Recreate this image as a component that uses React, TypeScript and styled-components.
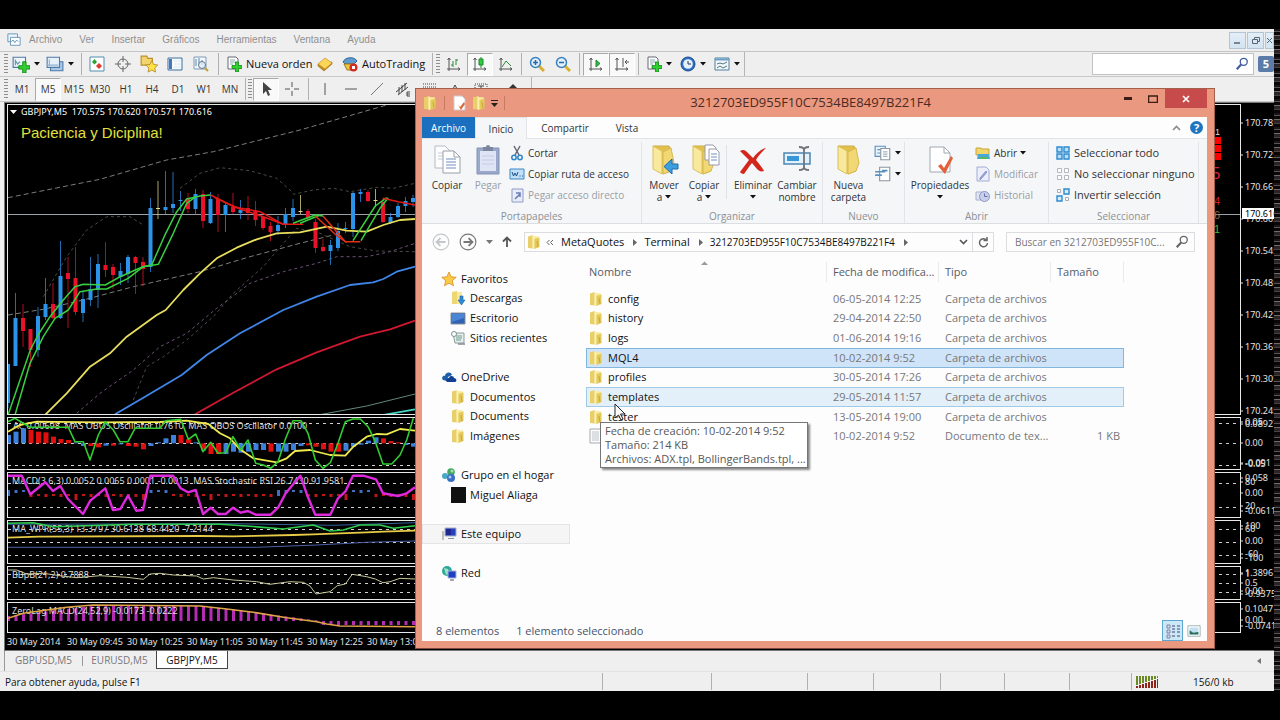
import React from "react";
import styled, { createGlobalStyle, css } from "styled-components";

const Global = createGlobalStyle`
  * { box-sizing: border-box; }
  body { margin: 0; background: #000; font: 11px/14px "Open Sans", "Noto Sans", sans-serif; color: #111; }
  button { font: inherit; color: inherit; border: 0; padding: 0; background: none; text-align: left; }
  a { color: inherit; text-decoration: none; }
  svg { display: block; flex: none; }
`;

/* ---------- terminal shell ---------- */

const Screen = styled.div`
  position: relative;
  display: grid;
  grid-template-columns: minmax(0, 1fr) 6px;
  min-height: 100vh;
  padding: 29px 0;
  background: #000;
  overflow: hidden;
`;
const Terminal = styled.div`
  display: flex;
  flex-direction: column;
  background: #f0eff0;
`;
const Static = styled.div`
  background: repeating-linear-gradient(#1a1517 0 2px, #5c5557 2px 3px, #0a0808 3px 6px, #6f6a6b 6px 7px, #2b2426 7px 10px, #494244 10px 11px, #080606 11px 14px);
`;
const MenuBar = styled.nav`
  display: flex;
  align-items: center;
  height: 23px;
  padding-left: 7px;
  border-bottom: 1px solid #c4c4c4;
  font-family: "Liberation Sans", sans-serif;
  font-size: 10px;
  color: #8f8f8f;
`;
const MenuItem = styled.button`
  margin-right: 17px;
`;
const MenuLogo = styled.span`
  margin-right: 8px;
`;
const WindowKeys = styled.div`
  display: flex;
  align-self: flex-start;
  gap: 1px;
  margin: 3px 0 0 auto;
`;
const WindowKey = styled.button<{ $w: number }>`
  display: grid;
  place-items: center;
  width: ${(p) => p.$w}px;
  height: 17px;
  overflow: hidden;
  border: 1px solid #b4c6d6;
  background: linear-gradient(#e4eef7, #d3e3f1);
`;
const ToolBar = styled.div`
  display: flex;
  align-items: center;
  height: 25px;
  padding-left: 4px;
  border-bottom: 1px solid #c8c8c8;
`;
const ToolGroup = styled.div<{ $edge?: boolean }>`
  display: flex;
  align-items: center;
  height: 24px;
  border-right: ${(p) => (p.$edge ? "1px solid #b5b5b5" : "0")};
`;
const Grip = styled.span`
  width: 4px;
  height: 20px;
  margin-right: 1px;
  background: repeating-linear-gradient(#8e8e8e 0 1px, transparent 1px 3px);
`;
const Divider = styled.span<{ $w: number }>`
  width: ${(p) => p.$w}px;
  height: 22px;
  background: linear-gradient(#b0b0b0, #b0b0b0) center / 1px 100% no-repeat;
`;
const Tool = styled.button<{ $w?: number; $on?: boolean; $start?: boolean }>`
  display: flex;
  align-items: center;
  justify-content: ${(p) => (p.$start ? "flex-start" : "center")};
  gap: 4px;
  width: ${(p) => p.$w ?? 26}px;
  height: 23px;
  padding-left: ${(p) => (p.$start ? 3 : 0)}px;
  white-space: nowrap;
  border: 1px solid transparent;
  ${(p) =>
    p.$on &&
    css`
      background: #f9f9f9;
      border-color: #a9a9a9 #fff #fff #a9a9a9;
    `}
`;
const Period = styled(Tool)`
  font-size: 10px;
  color: #333;
`;
const SearchField = styled.label`
  display: flex;
  align-items: center;
  width: 162px;
  height: 22px;
  margin-left: auto;
  padding-right: 4px;
  background: #fff;
  border: 1px solid #c2c2c2;
  input { flex: 1; min-width: 0; border: 0; outline: 0; background: none; }
`;
const News = styled.button`
  display: grid;
  place-items: center;
  width: 16px;
  height: 16px;
  margin-left: 4px;
  border-radius: 2px;
  background: #5b7ba8;
  color: #fff;
  font-weight: 700;
`;

/* ---------- charts ---------- */

const Charts = styled.main`
  display: flex;
  flex: 1;
  flex-direction: column;
  gap: 2px;
  margin-left: 4px;
  padding: 1px 0 0 2px;
  background: #000;
  border: solid #777;
  border-width: 1px 0 1px 1px;
`;
const Pane = styled.section<{ $h: number }>`
  display: flex;
  height: ${(p) => p.$h}px;
`;
const Plot = styled.svg`
  flex: 1;
  min-width: 0;
  height: 100%;
  border: 1px solid #e8e8e8;
  font: 9px "Noto Sans", sans-serif;
`;
const Scale = styled.svg`
  width: 33px;
  height: 100%;
  overflow: visible;
  font: 9px "Noto Sans", sans-serif;
  fill: #e4e4e4;
  clip-path: inset(-6px 0);
`;
const TimeAxis = styled.div`
  display: flex;
  height: 14px;
  overflow: hidden;
  color: #e4e4e4;
  font: 9px/14px "Noto Sans", sans-serif;
  white-space: nowrap;
`;
const TimeMark = styled.span`
  flex: none;
  width: 60px;
`;
const Sheets = styled.div`
  display: flex;
  height: 20px;
  margin-left: 4px;
  color: #777;
  border-left: 1px solid #999;
`;
const SheetRule = styled.i`
  width: 1px;
  height: 10px;
  margin-top: 5px;
  background: #999;
`;
const Sheet = styled.button<{ $on?: boolean; $w: number }>`
  width: ${(p) => p.$w}px;
  height: 18px;
  font-size: 10px;
  text-align: center;
  background: ${(p) => (p.$on ? "#fff" : "none")};
  color: ${(p) => (p.$on ? "#111" : "inherit")};
  border: solid ${(p) => (p.$on ? "#444" : "transparent")};
  border-width: 0 1px 1px;
`;
const SheetScroll = styled.button`
  margin: 0 13px 0 auto;
`;
const StatusBar = styled.footer`
  display: flex;
  align-items: center;
  height: 20px;
  padding-left: 5px;
  border-top: 1px solid #e2e2e2;
  font-size: 10px;
`;
const StatusText = styled.span`
  flex: 1;
`;
const StatusCell = styled.span<{ $w: number }>`
  display: flex;
  align-items: center;
  gap: 35px;
  width: ${(p) => p.$w}px;
  height: 17px;
  padding-left: 4px;
  border-left: 1px solid #b0b0b0;
  white-space: nowrap;
`;

type Candle = [string, number, number, number, number];
const BLUE = "#2b93ea";
const RED = "#ea122b";
const CREAM = "#e3dc86";
const candles: Candle[] = [
  [BLUE, 364, 408, 364, 403], [BLUE, 293, 366, 318, 366], [RED, 304, 347, 318, 331], [RED, 329, 367, 329, 350],
  [BLUE, 307, 357, 316, 350], [BLUE, 278, 320, 304, 317], [RED, 283, 319, 304, 318], [BLUE, 241, 319, 276, 318],
  [RED, 257, 328, 273, 279], [RED, 247, 315, 278, 312], [BLUE, 291, 322, 299, 313], [BLUE, 257, 306, 289, 300],
  [BLUE, 254, 308, 264, 290], [RED, 242, 277, 265, 270], [RED, 264, 289, 267, 275], [BLUE, 263, 285, 271, 277],
  [BLUE, 255, 283, 257, 274], [RED, 256, 294, 257, 263], [RED, 257, 286, 262, 269], [BLUE, 198, 272, 208, 267],
  [CREAM, 181, 219, 208, 209], [BLUE, 171, 214, 207, 210], [BLUE, 172, 213, 204, 208], [BLUE, 191, 211, 200, 201],
  [RED, 193, 213, 198, 209], [BLUE, 189, 215, 194, 209], [RED, 190, 228, 194, 221], [BLUE, 192, 224, 199, 223],
  [RED, 194, 232, 199, 215], [BLUE, 203, 232, 205, 215], [RED, 193, 214, 207, 212], [BLUE, 200, 219, 210, 213],
  [RED, 196, 220, 208, 213], [RED, 201, 226, 211, 220], [RED, 217, 230, 217, 228], [RED, 222, 241, 226, 232],
  [BLUE, 216, 235, 225, 231], [BLUE, 208, 228, 214, 225], [BLUE, 199, 221, 208, 217], [CREAM, 195, 214, 211, 212],
  [RED, 209, 219, 211, 218], [RED, 219, 253, 222, 248], [RED, 239, 252, 247, 251], [BLUE, 240, 265, 245, 251],
  [BLUE, 223, 251, 231, 248], [BLUE, 222, 233, 228, 229], [BLUE, 192, 237, 193, 229], [BLUE, 189, 202, 192, 194],
  [RED, 190, 202, 192, 201], [CREAM, 189, 207, 200, 201], [RED, 198, 223, 202, 222], [BLUE, 213, 224, 217, 223],
  [BLUE, 203, 218, 206, 217], [BLUE, 197, 212, 201, 206], [BLUE, 195, 207, 198, 202],
];

const scaled = (raw: string, dy: number) =>
  raw.split(" ").map((pt) => {
    const [x, y] = pt.split(",").map(Number);
    return `${(x / 3 - 8).toFixed(1)},${(y / 3 + dy).toFixed(1)}`;
  }).join(" ");

const Series = ({ d, dy, c, w = 1, dash }: { d: string; dy: number; c: string; w?: number; dash?: string }) => (
  <polyline points={scaled(d, dy)} fill="none" stroke={c} strokeWidth={w} strokeDasharray={dash} strokeLinejoin="round" />
);
const Level = ({ y, dy }: { y: number; dy: number }) => (
  <line x1="0" x2="100%" y1={Math.round(y / 3 + dy) + 0.5} y2={Math.round(y / 3 + dy) + 0.5} stroke="#d0d0d0" strokeDasharray="3 4" />
);
const Ticks = ({ marks }: { marks: [number, string][] }) => (
  <Scale>
    {marks.map(([y, t], i) => (
      <g key={i}>
        <path d={`M0 ${y}h2`} stroke="#ddd" />
        <text x="4" y={y + 3}>{t}</text>
      </g>
    ))}
  </Scale>
);

const MainPane = () => (
  <Pane $h={311} aria-label="GBPJPY">
    <Plot>
      <Series dy={-5} c="#7a7f7a" dash="5 3" d="24,293 300,238 500,180 640,155 900,90 1160,15" />
      <Series dy={-5} c="#454d45" dash="3 3" d="130,590 200,470 260,390 320,350 390,350 430,375" />
      <Series dy={-5} c="#454d45" dash="3 3" d="540,265 600,220 660,203 750,212 830,235 870,270 880,283 940,270 1000,265 1050,275 1130,262 1180,265 1245,250" />
      <Series dy={-5} c="#7a7f7a" dash="5 3" d="24,645 130,628 250,600 400,560 600,515 750,470 900,430 1000,405" />
      <Series dy={-5} c="#70507a" dash="3 3" d="230,940 300,880 400,810 480,740 560,700 650,625 750,550 850,515 950,490 1010,470 1100,470 1170,455 1245,430" />
      <Series dy={-5} c="#454d45" dash="3 3" d="400,900 440,800 490,770 560,720 640,650 700,580 790,500 850,430 890,385 960,400 1050,440 1130,453 1245,455" />
      <line x1="0" x2="100%" y1="109.5" y2="109.5" stroke="#9aa0a6" />
      {candles.map(([c, hi, lo, a, b], i) => (
        <g key={i} fill={c}>
          <rect x={i * 7.5 - 0.5} y={hi - 105} width="1" height={lo - hi} opacity=".75" />
          <rect x={i * 7.5 - 2} y={a - 105} width="4" height={b - a} />
        </g>
      ))}
      <Series dy={-5} c="#e8de5e" w={1.8} d="135,945 200,880 270,800 330,760 380,710 470,645 497,630 550,570 600,520 650,475 710,443 770,418 830,400 900,397 980,380 1040,392 1100,395 1150,375 1200,360 1245,357" />
      <Series dy={-5} c="#3f86e8" w={1.8} d="345,943 430,893 545,825 620,765 720,700 850,630 950,590 1050,555 1120,547 1150,537 1190,515 1245,500" />
      <Series dy={-5} c="#d01830" w={1.8} d="585,943 700,878 830,808 950,757 1080,710 1170,688 1245,662" />
      <Series dy={-5} c="#5f8a7c" d="955,945 1100,918 1245,882" />
      <Series dy={-5} c="#46d6c4" w={1.8} d="1150,945 1245,928" />
      <Series dy={-5} c="#38d040" w={1.5} d="24,945 60,840 91,750 114,705 150,650 190,600 225,560 250,553 316,555 361,530 406,510 429,500 455,495 497,400 530,335 560,297 600,288 632,285" />
      <Series dy={-5} c="#38d040" w={1.5} d="45,945 90,790 130,710 165,655 205,630 240,575 290,567 320,567 384,535 430,500 475,493 520,400 560,310 587,290" />
      <Series dy={-5} c="#e01818" w={1.5} d="632,285 700,320 780,335 850,373 910,373" />
      <Series dy={-5} c="#e01818" w={1.5} d="645,293 720,327 790,350 850,373" />
      <Series dy={-5} c="#38d040" w={1.5} d="879,370 946,345 969,348" />
      <Series dy={-5} c="#38d040" w={1.5} d="900,370 960,345" />
      <Series dy={-5} c="#e03018" w={1.5} d="969,348 1036,425 1081,425" />
      <Series dy={-5} c="#e03018" w={1.5} d="946,348 1014,410 1040,427" />
      <Series dy={-5} c="#38d040" w={1.5} d="1059,422 1126,318 1160,293" />
      <Series dy={-5} c="#38d040" w={1.5} d="1083,422 1140,325 1165,293" />
      <Series dy={-5} c="#e01818" w={1.5} d="1149,295 1195,305 1245,315" />
      <path d="M2 5h7l-3.500 4z" fill="#fff" />
      <text x="13" y="10" fill="#fff">GBPJPY,M5&nbsp; 170.575 170.620 170.571 170.616</text>
      <text x="13" y="33" fill="#e2e03c" fontSize="15" fontFamily="Liberation Sans, sans-serif">Paciencia y Diciplina!</text>
      <svg x="100%" overflow="visible">
        <g fontFamily="Liberation Sans, sans-serif">
          <text x="-25" y="30" fontSize="9" fill="#ddd">1</text>
          <path d="M-28 32h9v7h-9zM-28 40h9v7h-9zM-28 48h9v7h-9z" fill="#f00" />
          <text x="-29" y="74" fontSize="17" fill="#d8203c">5</text>
          <text x="-26" y="100" fontSize="11" fill="#d02020">4</text>
          <text x="-26" y="114" fontSize="11" fill="#8a6a50">6</text>
          <text x="-26" y="128" fontSize="11" fill="#30c030">1</text>
        </g>
      </svg>
    </Plot>
    <Scale>
      {["785", "725", "665", "605", "545", "485", "425", "365", "305", "245"].map((n, i) => (
        <g key={n}>
          <path d={`M0 ${19 + i * 32}h2`} stroke="#ddd" />
          <text x="4" y={22 + i * 32}>170.{n}</text>
        </g>
      ))}
      <path d="M1 104h32v11H1z" fill="#fff" />
      <text x="4" y="113" fill="#000">170.616</text>
    </Scale>
  </Pane>
);

const at = (i: number) => i * 7.5;
const oscTops = [75, 65, 55, 60, 65, 67, 80, 87, 90, 97, 108, 108, 112, 107, 107, 103, 108, 110, 118, 108, 97, 85, 75, 75, 88, 97, 122, 132, 132, 132, 125, 128, 125, 120, 120, 125, 125, 125, 120, 108, 106, 110, 118, 125, 125, 122, 110, 104, 92, 82, 85, 93, 97, 105, 110];
const oscRed = [3, 4, 5, 6, 7, 8, 11, 12, 14, 16, 17, 18, 23, 24, 26, 27, 28, 35, 40, 41, 42, 43, 44, 50, 51, 52];
const macdBlue = [0, 1, 2, 19, 20, 21, 36, 37, 38, 39, 46, 47, 48];

const Oscillators = () => (
  <>
    <Pane $h={53}>
      <Plot>
        {[38, 100, 165].map((y) => <Level key={y} y={y} dy={-8} />)}
        <text x="5" y="11" fill="#ddd">AC 0.00698&nbsp; MAS OBOS Oscillator 0.7610&nbsp; MAS OBOS Oscillator 0.0100</text>
        {oscTops.map((t, i) => (
          <rect key={i} x={at(i) - 2} width="5" y={Math.min(t, 100) / 3 - 8} height={Math.abs(t - 100) / 3} fill={oscRed.includes(i) ? "#e01010" : "#3c82dc"} />
        ))}
        <Series dy={-8} c="#f0ea50" w={1.8} d="24,65 60,45 110,35 300,37 480,36 560,32 625,42 660,70 690,85 720,118 760,145 830,157 860,145 885,123 930,120 990,135 1036,137 1060,110 1100,80 1130,72 1160,73 1200,57 1245,62" />
        <Series dy={-8} c="#30cc30" w={1.6} d="24,35 45,25 70,40 90,52 205,52 225,95 250,95 270,150 295,75 316,35 340,60 360,95 384,95 405,55 480,55 497,32 542,28 565,88 587,72 609,125 632,97 654,130 677,128 699,80 722,120 744,90 767,160 790,165 812,175 834,155 857,85 879,32 903,32 924,70 946,150 969,175 991,158 1014,100 1036,35 1059,27 1081,27 1104,50 1126,95 1149,162 1175,162 1200,135 1220,90 1240,25" />
      </Plot>
      <Ticks marks={[[5, "0.05"], [7, "0.08927"], [26, "0.00"], [46, "-0.091"], [47, "-0.05"]]} />
    </Pane>
    <Pane $h={46}>
      <Plot>
        {[218, 292].map((y) => <Level key={y} y={y} dy={-63} />)}
        <text x="4" y="11" fill="#ddd">MACD(3,6,3) 0.0052 0.0065 0.0001 -0.0013&nbsp; MAS Stochastic RSI 26.7430 91.9581</text>
        {oscTops.map((_, i) => (
          <rect key={i} x={at(i) - 1} width="3" y={macdBlue.includes(i) ? 17 : 21} height={i % 9 === 0 ? 6 : i % 2 ? 3 : 2} fill={macdBlue.includes(i) ? "#3f6fc0" : "#c01818"} />
        ))}
        <Series dy={-63} c="#dd28dd" w={2.4} d="24,197 65,197 91,253 136,217 159,243 181,228 204,267 249,312 271,272 316,235 339,300 361,297 384,257 409,302 429,300 451,197 519,197 542,235 564,247 587,240 609,312 632,293 654,312 677,312 699,293 722,308 744,303 767,314 812,314 834,293 857,250 901,197 924,262 946,314 991,314 1014,265 1036,245 1059,197 1090,197 1128,208 1149,250 1194,258 1220,250 1245,232" />
      </Plot>
      <Ticks marks={[[6, "0.058"], [10, "80"], [21, "0.00"], [34, "20"], [39, "-0.0611"]]} />
    </Pane>
    <Pane $h={44}>
      <Plot>
        {[358, 395, 434].map((y) => <Level key={y} y={y} dy={-111} />)}
        <text x="4" y="11" fill="#ddd">MA_WPR(55,3) 13.3797 30.6138 68.4420 -7.2144</text>
        <Series dy={-111} c="#3a5f98" d="24,343 700,341 1000,346 1245,338" />
        <Series dy={-111} c="#30cc50" w={1.6} d="24,340 100,338 160,350 400,343 660,343 740,348 850,357 900,350 940,345 990,363 1030,360 1080,345 1140,345 1180,355 1245,347" />
        <Series dy={-111} c="#e8cc48" w={1.8} d="24,383 115,380 600,378 700,379 880,375 940,373 1100,367 1150,365 1245,362" />
        <Series dy={-111} c="#4a62a8" d="24,412 770,412 950,405 1100,397 1245,393" />
      </Plot>
      <Ticks marks={[[6, "100"], [9, "60"], [21, "0.00"], [34, "-60"], [38, "-100"]]} />
    </Pane>
    <Pane $h={34}>
      <Plot>
        {[493, 518, 545].map((y) => <Level key={y} y={y} dy={-157} />)}
        <text x="4" y="11" fill="#ddd">BBpB(21,2) 0.7888</text>
        <Series dy={-157} c="#c6c79a" d="24,480 50,480 80,492 130,490 180,497 230,503 300,497 380,502 430,508 450,492 480,490 520,495 590,498 610,507 640,503 700,510 770,515 810,523 870,515 910,517 930,528 948,552 990,545 1012,527 1036,522 1057,493 1100,500 1126,507 1149,518 1170,515 1200,505 1245,507" />
      </Plot>
      <Ticks marks={[[7, "1.3896"], [8, "1"], [17, "0.5"], [25, "0.00"], [28, "-0.9375"]]} />
    </Pane>
    <Pane $h={31}>
      <Plot>
        {oscTops.map((_, i) => {
          const top = i < 12 ? 12 - i * 0.9 : i < 26 ? 2 : Math.min(17, 2 + (i - 26) * 0.95);
          return <rect key={i} x={at(i) - 1} width="3" y={i > 41 ? 18 : top + 1} height={i > 41 ? 4 : 17 - top} fill="#b42cb4" />;
        })}
        <text x="4" y="11" fill="#ddd">ZeroLag MACD(24,52,9) -0.0173 -0.0222</text>
        <Series dy={-193} c="#e0a448" w={1.6} d="24,625 70,610 200,592 280,585 600,588 680,597 760,607 860,623 950,635 980,642 1020,648 1245,650" />
      </Plot>
      <Ticks marks={[[7, "0.1047"], [18, "0.00"], [24, "-0.0741"]]} />
    </Pane>
  </>
);

/* ---------- icons ---------- */

const Ico = ({ s = 16, children, ...rest }: { s?: number; children: React.ReactNode } & React.SVGProps<SVGSVGElement>) => (
  <svg width={s} height={s} viewBox="0 0 16 16" fill="none" aria-hidden {...rest}>{children}</svg>
);
const Plus = ({ x = 6, y = 6 }) => (
  <path transform={`translate(${x} ${y})`} d="M3.500 0h3v3.500H10v3H6.500V10h-3V6.500H0v-3h3.500z" fill="#2fd02f" stroke="#128a18" strokeWidth=".8" />
);
const Caret = () => <svg width="6" height="4" aria-hidden><path d="M0 0h6L3 3.500z" fill="#111" /></svg>;
const NewChart = () => <Ico s={18}><path d="M1 2h11v9H1z" fill="#eef5fb" stroke="#4e7ba6" /><path d="M3 4v5M3 5l2 3 2-2" stroke="#69a" /><Plus /></Ico>;
const Profiles = () => <Ico s={18}><path d="M4 6h11v8H4z" fill="#a9c7e6" stroke="#4e7ba6" /><path d="M1 2h11v9H1z" fill="#e6f1fb" stroke="#4e7ba6" /><path d="M3 4v5M1 9h10" stroke="#8fb2d2" /></Ico>;
const Market = () => <Ico><path d="M1 1h14v14H1z" fill="#fff" stroke="#4e8fae" /><path d="M5.500 3l2.500 3-2.500 2.500L3 6z" fill="#25a52b" /><path d="M10 7l3 3-3 3-3-3z" fill="#e0392a" /></Ico>;
const Target = () => <Ico stroke="#666"><circle cx="8" cy="8" r="5" /><path d="M8 0v6M8 10v6M0 8h6M10 8h6" /></Ico>;
const StarFolder = () => <Ico s={18}><path d="M1 1h5l1 2h4v6H1z" fill="#f3d46c" stroke="#b98f28" /><path d="M10.500 5l1.600 3.400 3.700.5-2.700 2.600.7 3.700-3.300-1.800-3.300 1.800.7-3.700L5.200 8.900l3.700-.5z" fill="#ffe14a" stroke="#b98f28" strokeWidth=".8" /></Ico>;
const Panel = () => <Ico><path d="M1 2h14v12H1z" fill="#f7fafd" stroke="#3f6f9f" /><path d="M2 3h3v10H2z" fill="#3d7ab6" /><path d="M7 5h7M7 8h7M7 11h7" stroke="#dbe7f2" /></Ico>;
const Tester = () => <Ico><path d="M1 1h12v12H1z" fill="#f4f8fc" stroke="#7c9ab6" /><path d="M3 3v7M6 2v6M9 4v5" stroke="#5583ad" /><circle cx="9" cy="9" r="3.500" fill="#d9ecf8cc" stroke="#678" /><path d="M12 12l3 3" stroke="#c6a02c" strokeWidth="2" /></Ico>;
const NewOrder = () => <Ico><path d="M2 1h8l2 2v10H2z" fill="#fff" stroke="#667" /><path d="M4 4h5M4 6h6M4 8h3" stroke="#8aa" /><Plus /></Ico>;
const Gold = () => <Ico><path d="M1 8v2l6 5 8-7V6z" fill="#c48e1c" stroke="#94680c" strokeWidth=".6" /><path d="M1 8l7-6 7 5-7 6z" fill="#fbd458" stroke="#b5851a" strokeWidth=".6" /></Ico>;
const Auto = () => <Ico><path d="M1 6c2-5 11-6 14-1l-3 3H3z" fill="#5f9bd1" stroke="#2c6397" /><path d="M2 8h11l-2 6H5z" fill="#f0c542" stroke="#a37b12" /><circle cx="11.500" cy="11.500" r="4" fill="#d32b20" /><path d="M10 10h3v3h-3z" fill="#fff" /></Ico>;
const Axes = ({ children }: { children: React.ReactNode }) => <Ico stroke="#555"><path d="M3 2v13M1 13h13M1.500 4L3 2l1.500 2M12 11.500L14 13l-2 1.500" />{children}</Ico>;
const Lens = ({ minus }: { minus?: boolean }) => <Ico><path d="M10 10l5 5" stroke="#d9b030" strokeWidth="3" /><circle cx="6.500" cy="6.500" r="5" fill="#dff0fb" stroke="#3b80bd" strokeWidth="1.500" /><path d={minus ? "M4 6.500h5" : "M4 6.500h5M6.500 4v5"} stroke="#2668a8" strokeWidth="1.500" /></Ico>;
const Clock = () => <Ico><circle cx="8" cy="8" r="7" fill="#2e6fc0" stroke="#1b4c8c" /><circle cx="8" cy="8" r="4.800" fill="#e5f1fc" /><path d="M8 5v3h3" stroke="#334" /></Ico>;
const Template = () => <Ico><path d="M1 2h14v12H1z" fill="#f1f7fb" stroke="#4c7f9e" /><path d="M1 3.500h14" stroke="#6ea0c4" strokeWidth="2" /><path d="M3 8l3-1 3 1 4-2M3 12l3-2 3 2 4-2" stroke="#577" /></Ico>;
const Glass = ({ c = "#3f5ca0" }) => <Ico s={14} stroke={c}><circle cx="10" cy="5.500" r="4" strokeWidth="1.500" /><path d="M7 8.500L2 14" strokeWidth="2.500" /></Ico>;

const Folder = ({ s = 16 }: { s?: number }) => (
  <Ico s={s}>
    <path d="M2 2.500L7 1v13.500L2 14z" fill="#e9cf6a" />
    <path d="M7 2l6 .5V13l-6 2z" fill="#f7ea9c" />
    <path d="M8.500 5l5-1.500v9.500l-5 2z" fill="#e3c95a" />
    <path d="M7 1.500v13" stroke="#fff6c4" />
    <path d="M11 7l1 6" stroke="#c9a83a" />
  </Ico>
);
const CopyPages = () => (
  <svg width="32" height="32" viewBox="0 0 32 32" fill="none" aria-hidden>
    <path d="M4 2h10l5 5v17H4z" fill="#fdfdfd" stroke="#b4bac2" />
    <path d="M7 9h8M7 12h8M7 15h8" stroke="#c6cdd6" />
    <path d="M12 7h11l6 6v16H12z" fill="#fff" stroke="#98a0aa" />
    <path d="M23 7v6h6" stroke="#98a0aa" />
    <path d="M15 15h10M15 18h10M15 21h10M15 24h10" stroke="#6f8fbf" />
  </svg>
);
const Clipboard = () => (
  <svg width="32" height="32" viewBox="0 0 32 32" fill="none" aria-hidden>
    <path d="M5 4h22v26H5z" fill="#9aa8ca" stroke="#8593b8" />
    <path d="M8 7h16v20H8z" fill="#dfe5f5" />
    <path d="M10 12h12M10 16h12M10 20h12" stroke="#c4cde4" />
    <path d="M11 3h3a2 2 0 014 0h3v4H11z" fill="#7c86a0" />
  </svg>
);
const BigFolder = ({ mark }: { mark?: "move" | "copy" }) => (
  <svg width="32" height="32" viewBox="0 0 32 32" fill="none" aria-hidden>
    <path d="M5 2h16l2 3v22l-8 3z" fill="#e3bf4c" stroke="#cfae48" />
    <path d="M15 8l8-4 3 15-3 8-8 3z" fill="#f2d873" stroke="#d8b850" />
    <path d="M5 2l9 5v23l-9-5z" fill="#f9e99c" stroke="#dcc05a" />
    {mark === "move" && <path d="M30 20h-6v-5l-8 7.500 8 7.500v-5h6z" fill="#3b9fe0" stroke="#1c6cae" />}
    {mark === "copy" && <g><path d="M17 1h8l3 3v12H17z" fill="#fff" stroke="#99a" /><path d="M21 5h7l3 3v13H21z" fill="#fff" stroke="#99a" /><path d="M23 10h6M23 13h6M23 16h6" stroke="#6f8fbf" /></g>}
  </svg>
);
const RedCross = () => (
  <svg width="32" height="32" viewBox="0 0 32 32" aria-hidden>
    <path d="M3 7c3-2 5-1 7 1l6 6c4-5 8-9 13-10-4 4-8 8-10 12 3 4 6 7 8 11-3 1-5 0-7-2l-5-6c-3 3-5 7-8 11-2 0-3-1-4-2 3-4 6-8 9-12-3-3-6-6-9-9z" fill="#d3261c" />
  </svg>
);
const Rename = () => (
  <svg width="32" height="32" viewBox="0 0 32 32" fill="none" aria-hidden>
    <path d="M3 9h26v11H3z" fill="#e4f1fb" stroke="#4c86b4" strokeWidth="1.500" />
    <path d="M6 12h12v5H6z" fill="#3797d8" />
    <path d="M18 3c4 0 5 1 5 3v17c0 2-1 3-5 3M28 3c-4 0-5 1-5 3v17c0 2 1 3 5 3" stroke="#707478" strokeWidth="1.800" />
  </svg>
);
const PropSheet = () => (
  <svg width="32" height="32" viewBox="0 0 32 32" fill="none" aria-hidden>
    <path d="M6 3h14l6 6v19H6z" fill="#fff" stroke="#a0a8b0" />
    <path d="M20 3v6h6" stroke="#a0a8b0" />
    <path d="M14 22l3-2 3 4 7-12 2 2-8 16z" fill="#e0613a" />
  </svg>
);
const Cut = () => <Ico><path d="M5 1l5 9M11 1L6 10" stroke="#667" strokeWidth="1.500" /><circle cx="5" cy="12.500" r="2.200" stroke="#2d87c8" strokeWidth="1.500" /><circle cx="11" cy="12.500" r="2.200" stroke="#2d87c8" strokeWidth="1.500" /></Ico>;
const PathIcon = () => <Ico><path d="M1 3h14v10H1z" fill="#bfe0f8" stroke="#3e86bf" /><path d="M3 6l1.500 4L6 7l1.500 3L9 6M10.500 10h1M13 10h1" stroke="#1c4f86" /></Ico>;
const Shortcut = () => <Ico><path d="M3 2h11v13H3z" fill="#e8ecf8" stroke="#8f9cc4" /><path d="M6 12l5-5M7 6h4v4" stroke="#6a79b4" strokeWidth="1.500" /></Ico>;
const NewItem = () => <Ico s={18}><path d="M1 2h9v9H1z" fill="#eaf4fc" stroke="#5a8fbe" /><path d="M3 5h5M3 8h5" stroke="#5a8fbe" /><path d="M6 4h8v10H6z" fill="#fff" stroke="#8a97a4" /><path d="M8 7h4M8 9h4M8 11h4" stroke="#a5b3c0" /></Ico>;
const EasyAccess = () => <Ico s={18}><path d="M5 2h9v12H5z" fill="#fff" stroke="#8a97a4" /><path d="M1 6h9M1 9h6M7 5h5" stroke="#5a8fbe" strokeWidth="1.500" /></Ico>;
const OpenIcon = () => <Ico><path d="M1 3h5l1 1h7v6H1z" fill="#f2d66c" stroke="#c7a53a" /><path d="M3 9h11l1 5H2z" fill="#49a8d8" /><path d="M4 12h9v2H4z" fill="#5cb85a" /></Ico>;
const EditIcon = () => <Ico><path d="M2 1h9l3 3v11H2z" fill="#eceffa" stroke="#a3acd4" /><path d="M12 6l-6 7-1 1 0-2 6-7z" fill="#8f9ad0" stroke="#8f9ad0" /></Ico>;
const History = () => <Ico><path d="M1 5h6v8H1z" fill="#dfe3f3" stroke="#aab0d2" /><circle cx="9.500" cy="9.500" r="5" fill="#c9cfea" stroke="#8c95c6" /><path d="M9.500 6.500v3h3" stroke="#6670ac" /></Ico>;
const SelAll = () => <Ico><path d="M2 2h5v5H2zM9 2h5v5H9zM2 9h5v5H2zM9 9h5v5H9z" fill="#b9def7" stroke="#2d8ad0" strokeWidth="1.400" /></Ico>;
const SelNone = () => <Ico><path d="M2.500 2.500h4v4h-4zM9.500 2.500h4v4h-4zM2.500 9.500h4v4h-4zM9.500 9.500h4v4h-4z" fill="#fff" stroke="#b4b8bd" /></Ico>;
const SelInv = () => <Ico><path d="M2.500 2.500h3v3h-3zM10.500 10.500h3v3h-3z" fill="#fff" stroke="#a7acb2" /><path d="M9 2h5v5H9zM2 9h5v5H2z" fill="#d6ecfb" stroke="#2d8ad0" strokeWidth="1.400" /></Ico>;
const Star = () => <Ico><path d="M8 1l2.100 4.800 5.100.5-3.900 3.400 1.200 5.100L8 12.100l-4.500 2.700 1.200-5.100L.8 6.300l5.100-.5z" fill="#fbc94a" stroke="#d58f1e" strokeWidth=".8" /></Ico>;
const Downloads = () => <Ico><path d="M2 2l5-1v13H2z" fill="#efd674" /><path d="M7 2h5v12H7z" fill="#f7ea9c" /><path d="M10 6h3v4h2l-3.500 5L8 10h2z" fill="#2f8ad2" stroke="#1e62a0" strokeWidth=".6" /></Ico>;
const Desk = () => <Ico><path d="M1 3h14v11H1z" fill="#2d62b4" stroke="#8a9099" /><path d="M2 4h12v4L2 12z" fill="#4b86d6" /></Ico>;
const Recent = () => <Ico><path d="M3 3h11v10H5z" fill="#e8f0ee" stroke="#8a9a9a" /><path d="M6 6h6M6 8h6M6 10h5" stroke="#6f9a90" /><circle cx="4" cy="4" r="2.500" fill="#fff" stroke="#7c9090" /><path d="M8 14h7" stroke="#889" strokeWidth="1.500" /></Ico>;
const Cloud = () => <Ico><path d="M2 11c-2-2 0-5 2-4 0-4 6-5 7-1l-4 2-1 4z" fill="#1d5fa8" /><path d="M6 13c-2-2 0-4 2-4 1-3 5-2 5 0 3 0 3 4 1 4z" fill="#123f92" /></Ico>;
const HomeGroup = () => <Ico><circle cx="10" cy="5" r="3.800" fill="#45a862" /><circle cx="4" cy="9" r="3" fill="#4aa7c8" /><circle cx="10" cy="11" r="4" fill="#3a6fc4" /><circle cx="11" cy="4" r="1.500" fill="#a8e0a8" /><circle cx="9" cy="10" r="1.500" fill="#a9cbf4" /></Ico>;
const Avatar = () => <Ico><path d="M1 0h15v16H1z" fill="#111" /></Ico>;
const Pc = () => <Ico><path d="M1 5h2v9H1z" fill="#b9c2b8" /><path d="M4 2h11v8H4z" fill="#2a3fc0" stroke="#a7b0c4" /><path d="M5 3h5v6H5z" fill="#1c2890" /><path d="M7 12h6v1H7z" fill="#8a93a8" /></Ico>;
const Net = () => <Ico><circle cx="6" cy="6" r="5" fill="#2ca79a" /><path d="M3 3l4 1 1 4-3 2" fill="#9fe0c8" /><path d="M7 6h8v7H7z" fill="#1d3fc0" stroke="#9fb2dd" /><path d="M9 15h4" stroke="#556" /></Ico>;
const TextDoc = () => <Ico><path d="M2 1h11v14H2z" fill="#fbfbfb" stroke="#a4a9b0" /><path d="M4 4h7M4 6h7M4 8h7M4 10h7M4 12h7" stroke="#bcc3ca" /></Ico>;

/* ---------- explorer window ---------- */

const Explorer = styled.section`
  position: absolute;
  top: 88px;
  left: 415px;
  right: 65px;
  display: flex;
  flex-direction: column;
  padding: 0 7px 7px 6px;
  background: #ea987f;
  border: 1px solid #a5604c;
  border-bottom-color: #7d4a3c;
`;
const TitleBar = styled.header`
  display: grid;
  grid-template-columns: 1fr auto 1fr;
  align-items: start;
  height: 28px;
`;
const QuickBar = styled.div`
  display: flex;
  align-items: center;
  gap: 4px;
  height: 28px;
`;
const QuickRule = styled.i`
  width: 1px;
  height: 14px;
  margin: 0 2px;
  background: #c77b63;
`;
const Title = styled.h1`
  margin: 0;
  padding-right: 8px;
  font-size: 13px;
  line-height: 27px;
  font-weight: 400;
  color: #4c2a20;
`;
const FrameKeys = styled.div`
  display: flex;
  justify-content: flex-end;
`;
const FrameKey = styled.button<{ $close?: boolean }>`
  display: grid;
  place-items: center;
  width: ${(p) => (p.$close ? 42 : 25)}px;
  height: 19px;
  background: ${(p) => (p.$close ? "#c84b4b" : "none")};
`;
const Client = styled.div`
  display: flex;
  flex-direction: column;
  background: #fdfdfe;
`;
const TabRow = styled.div`
  display: flex;
  align-items: stretch;
  height: 22px;
  border-bottom: 1px solid #e2e4e8;
`;
const Tab = styled.button<{ $kind?: "file" | "on"; $w: number }>`
  width: ${(p) => p.$w}px;
  height: ${(p) => (p.$kind === "on" ? 22 : 21)}px;
  font-size: 10px;
  text-align: center;
  color: #333;
  ${(p) => p.$kind === "file" && css`background: #1a6fbe; color: #fff;`}
  ${(p) => p.$kind === "on" && css`background: #f5f6f8; border: 1px solid #e2e4e8; border-bottom: 0;`}
`;
const TabTools = styled.div`
  display: flex;
  align-items: center;
  gap: 9px;
  margin: 0 4px 0 auto;
`;
const Help = styled.button`
  display: grid;
  place-items: center;
  width: 13px;
  height: 13px;
  border-radius: 50%;
  background: #1f74c0;
  color: #fff;
  font-weight: 700;
`;
const Ribbon = styled.div`
  display: flex;
  height: 85px;
  padding-top: 3px;
  background: #f5f6f8;
  border-bottom: 1px solid #dcdee2;
  font-size: 10px;
`;
const Group = styled.div<{ $w: number }>`
  display: flex;
  flex-direction: column;
  flex: none;
  width: ${(p) => p.$w}px;
  border-right: 1px solid #e2e4e8;
`;
const GroupBody = styled.div`
  display: flex;
  flex: 1;
  align-items: flex-start;
`;
const GroupName = styled.div`
  height: 14px;
  color: #8b8f96;
  text-align: center;
`;
const GroupRule = styled.i`
  width: 1px;
  height: 54px;
  margin: 3px 5px 0 4px;
  background: #dfe1e5;
`;
const Big = styled.button<{ $w: number; $off?: boolean }>`
  display: flex;
  flex-direction: column;
  align-items: center;
  width: ${(p) => p.$w}px;
  line-height: 12px;
  text-align: center;
  color: ${(p) => (p.$off ? "#9a9ea6" : "#333")};
  svg:first-child { margin: 2px 0 3px; }
`;
const BigLine = styled.span`
  display: flex;
  align-items: center;
  gap: 3px;
  min-height: 12px;
`;
const Stack = styled.div<{ $pad?: number }>`
  display: flex;
  flex-direction: column;
  padding-left: ${(p) => p.$pad ?? 0}px;
`;
const Small = styled.button<{ $off?: boolean; $large?: boolean }>`
  display: flex;
  align-items: center;
  gap: 3px;
  height: 21px;
  font-size: ${(p) => (p.$large ? 11 : 10)}px;
  white-space: nowrap;
  color: ${(p) => (p.$off ? "#9a9ea6" : "#333")};
`;
const AddressRow = styled.div`
  display: flex;
  align-items: center;
  height: 35px;
  padding: 1px 12px 0 10px;
`;
const NavKeys = styled.div`
  display: flex;
  align-items: center;
  gap: 9px;
  width: 92px;
`;
const PathBox = styled.div`
  display: flex;
  flex: 1;
  align-items: center;
  height: 20px;
  padding-left: 1px;
  border: 1px solid #dcdde0;
  color: #111;
`;
const Crumb = styled.a<{ $root?: boolean; $id?: boolean }>`
  display: flex;
  align-items: center;
  gap: ${(p) => (p.$root ? 4 : 9)}px;
  margin-right: ${(p) => (p.$root ? 7 : 7)}px;
  font-size: ${(p) => (p.$id ? 10 : 11)}px;
  white-space: nowrap;
`;
const PathEnd = styled.div`
  display: flex;
  align-items: center;
  margin-left: auto;
`;
const Refresh = styled.button`
  display: grid;
  place-items: center;
  width: 21px;
  height: 18px;
  margin-left: 4px;
  border-left: 1px solid #dcdde0;
`;
const FindBox = styled.label`
  display: flex;
  align-items: center;
  width: 189px;
  height: 20px;
  margin-left: 12px;
  padding: 0 5px 0 8px;
  border: 1px solid #dcdde0;
  font-size: 10px;
  input { flex: 1; min-width: 0; border: 0; padding: 0; outline: 0; background: none; font: inherit; }
  input::placeholder { color: #777; opacity: 1; }
`;
const Split = styled.div`
  display: flex;
  min-height: 361px;
`;
const Tree = styled.nav`
  display: grid;
  grid-auto-rows: 1fr;
  flex: none;
  width: 148px;
  height: 314px;
  margin: 10px 16px 0 0;
`;
const Node = styled.a<{ $deep?: boolean; $row: number; $on?: boolean }>`
  display: flex;
  grid-row: ${(p) => p.$row};
  align-items: center;
  gap: 4px;
  padding-left: ${(p) => (p.$deep ? 27 : 18)}px;
  white-space: nowrap;
  border: 1px solid ${(p) => (p.$on ? "#e4e4e6" : "transparent")};
  background: ${(p) => (p.$on ? "#f5f5f6" : "none")};
`;
const Files = styled.div`
  position: relative;
`;
const Table = styled.table`
  table-layout: fixed;
  width: 538px;
  height: 187px;
  border-collapse: collapse;
  white-space: nowrap;
`;
const Head = styled.th`
  position: relative;
  height: 30px;
  padding: 0 0 4px 6px;
  text-align: left;
  font-weight: 400;
  color: #555b66;
  background: linear-gradient(#e8eaee, #e8eaee) right 3px / 1px 20px no-repeat;
  &:first-child { padding-left: 3px; }
`;
const SortMark = styled.svg`
  position: absolute;
  top: 2px;
  left: 115px;
`;
const Row = styled.tr<{ $tone?: "sel" | "hover" }>`
  color: #777;
  ${(p) => p.$tone && css`
    background: ${p.$tone === "sel" ? "#cfe4f9" : "#e3f0fa"};
    outline: 1px solid ${p.$tone === "sel" ? "#84b7de" : "#9fcbe6"};
    outline-offset: -1px;
  `}
`;
const Cell = styled.td<{ $end?: boolean }>`
  padding: 0 4px 0 6px;
  text-align: ${(p) => (p.$end ? "right" : "left")};
  overflow: hidden;
`;
const FileName = styled.a`
  display: flex;
  align-items: center;
  gap: 4px;
  margin-left: -4px;
  color: #111;
`;
const Tip = styled.div`
  position: absolute;
  top: 163px;
  left: 14px;
  width: 208px;
  padding: 1px 4px;
  border: 1px solid #767676;
  background: #fff;
  color: #575757;
  box-shadow: 2px 2px 2px #0007;
  white-space: nowrap;
`;
const Pointer = styled.svg`
  position: absolute;
  top: 144px;
  left: 28px;
`;
const Info = styled.footer`
  display: flex;
  align-items: center;
  gap: 17px;
  height: 21px;
  padding: 0 3px 0 14px;
  color: #44546a;
`;
const Views = styled.div`
  display: flex;
  margin-left: auto;
`;
const View = styled.button<{ $on?: boolean }>`
  display: grid;
  place-items: center;
  width: 21px;
  height: 21px;
  border: 1px solid ${(p) => (p.$on ? "#5ba7d0" : "transparent")};
  background: ${(p) => (p.$on ? "#cbe8f6" : "none")};
`;

const Arrow = ({ left, c }: { left?: boolean; c: string }) => (
  <Ico s={18} stroke={c}><circle cx="8" cy="8" r="7" /><path d={left ? "M12 8H4M7.500 4.500L4 8l3.500 3.500" : "M4 8h8M8.500 4.500L12 8l-3.500 3.500"} strokeWidth="1.600" /></Ico>
);
const Step = () => <svg width="4" height="7" aria-hidden><path d="M0 0l4 3.500L0 7z" fill="#666" /></svg>;

const tree: [number, string, React.ReactNode, boolean?][] = [
  [1, "Favoritos", <Star />], [2, "Descargas", <Downloads />, true], [3, "Escritorio", <Desk />, true], [4, "Sitios recientes", <Recent />, true],
  [6, "OneDrive", <Cloud />], [7, "Documentos", <Folder />, true], [8, "Documents", <Folder />, true], [9, "Imágenes", <Folder />, true],
  [11, "Grupo en el hogar", <HomeGroup />], [12, "Miguel Aliaga", <Avatar />, true], [14, "Este equipo", <Pc />], [16, "Red", <Net />],
];
const files: [string, string, "sel" | "hover" | undefined][] = [
  ["config", "06-05-2014 12:25", undefined], ["history", "29-04-2014 22:50", undefined], ["logs", "01-06-2014 19:16", undefined],
  ["MQL4", "10-02-2014 9:52", "sel"], ["profiles", "30-05-2014 17:26", undefined], ["templates", "29-05-2014 11:57", "hover"], ["tester", "13-05-2014 19:00", undefined],
];

const ExplorerWindow = () => (
  <Explorer aria-label="3212703ED955F10C7534BE8497B221F4">
    <TitleBar>
      <QuickBar>
        <Folder /><QuickRule />
        <Ico><path d="M3 1h8l3 3v11H3z" fill="#fff" stroke="#ccc" /><path d="M7 10l2 2 4-5 1 2-4 6z" fill="#d96a42" /></Ico>
        <Folder />
        <svg width="7" height="7" aria-hidden><path d="M0 0h7v1H0zM0 3h7l-3.500 4z" fill="#222" /></svg>
        <QuickRule />
      </QuickBar>
      <Title>3212703ED955F10C7534BE8497B221F4</Title>
      <FrameKeys>
        <FrameKey aria-label="Minimizar"><svg width="8" height="3"><path d="M0 0h8v3H0z" fill="#3a1d14" /></svg></FrameKey>
        <FrameKey aria-label="Maximizar"><svg width="10" height="8"><path d="M.5 1h9v6.500h-9zM0 1h10" fill="none" stroke="#3a1d14" strokeWidth="1.500" /></svg></FrameKey>
        <FrameKey $close aria-label="Cerrar"><svg width="8" height="8"><path d="M1 1l6 6M7 1L1 7" stroke="#fff" strokeWidth="1.600" /></svg></FrameKey>
      </FrameKeys>
    </TitleBar>
    <Client>
      <TabRow>
        <Tab $kind="file" $w={53}>Archivo</Tab>
        <Tab $kind="on" $w={52}>Inicio</Tab>
        <Tab $w={76}>Compartir</Tab>
        <Tab $w={48}>Vista</Tab>
        <TabTools>
          <svg width="9" height="6" aria-hidden><path d="M1 5l3.500-3.500L8 5" fill="none" stroke="#888" strokeWidth="1.600" /></svg>
          <Help aria-label="Ayuda">?</Help>
        </TabTools>
      </TabRow>
      <Ribbon>
        <Group $w={220}>
          <GroupBody>
            <Big $w={50}><CopyPages /><BigLine>Copiar</BigLine></Big>
            <Big $w={32} $off><Clipboard /><BigLine>Pegar</BigLine></Big>
            <Stack $pad={5}>
              <Small><Cut />Cortar</Small>
              <Small><PathIcon />Copiar ruta de acceso</Small>
              <Small $off><Shortcut />Pegar acceso directo</Small>
            </Stack>
          </GroupBody>
          <GroupName>Portapapeles</GroupName>
        </Group>
        <Group $w={181}>
          <GroupBody>
            <Big $w={44}><BigFolder mark="move" /><BigLine>Mover</BigLine><BigLine>a <Caret /></BigLine></Big>
            <Big $w={36}><BigFolder mark="copy" /><BigLine>Copiar</BigLine><BigLine>a <Caret /></BigLine></Big>
            <GroupRule />
            <Big $w={42}><RedCross /><BigLine>Eliminar</BigLine><BigLine><Caret /></BigLine></Big>
            <Big $w={46}><Rename /><BigLine>Cambiar</BigLine><BigLine>nombre</BigLine></Big>
          </GroupBody>
          <GroupName>Organizar</GroupName>
        </Group>
        <Group $w={82}>
          <GroupBody>
            <Big $w={51}><BigFolder /><BigLine>Nueva</BigLine><BigLine>carpeta</BigLine></Big>
            <Stack>
              <Small aria-label="Nuevo elemento"><NewItem /><Caret /></Small>
              <Small aria-label="Fácil acceso"><EasyAccess /><Caret /></Small>
            </Stack>
          </GroupBody>
          <GroupName>Nuevo</GroupName>
        </Group>
        <Group $w={144}>
          <GroupBody>
            <Big $w={70}><PropSheet /><BigLine>Propiedades</BigLine><BigLine><Caret /></BigLine></Big>
            <Stack>
              <Small><OpenIcon />Abrir <Caret /></Small>
              <Small $off><EditIcon />Modificar</Small>
              <Small $off><History />Historial</Small>
            </Stack>
          </GroupBody>
          <GroupName>Abrir</GroupName>
        </Group>
        <Group $w={150}>
          <GroupBody>
            <Stack $pad={6}>
              <Small $large><SelAll />Seleccionar todo</Small>
              <Small $large><SelNone />No seleccionar ninguno</Small>
              <Small $large><SelInv />Invertir selección</Small>
            </Stack>
          </GroupBody>
          <GroupName>Seleccionar</GroupName>
        </Group>
      </Ribbon>
      <AddressRow>
        <NavKeys>
          <button aria-label="Atrás"><Arrow left c="#c3c6ca" /></button>
          <button aria-label="Adelante"><Arrow c="#777" /></button>
          <button aria-label="Recientes"><svg width="7" height="4"><path d="M0 0h7L3.500 4z" fill="#777" /></svg></button>
          <button aria-label="Arriba"><svg width="10" height="12"><path d="M5 11V2M1 5.500L5 1.500l4 4" fill="none" stroke="#555" strokeWidth="1.800" /></svg></button>
        </NavKeys>
        <PathBox>
          <Crumb href="#" $root>
            <Folder />
            <svg width="8" height="7" aria-hidden><path d="M3.500 1L1 3.500 3.500 6M7 1L4.500 3.500 7 6" fill="none" stroke="#666" /></svg>
          </Crumb>
          <Crumb href="#">MetaQuotes <Step /></Crumb>
          <Crumb href="#">Terminal <Step /></Crumb>
          <Crumb href="#" $id>3212703ED955F10C7534BE8497B221F4 <Step /></Crumb>
          <PathEnd>
            <svg width="9" height="6" aria-hidden><path d="M1 1l3.500 3.500L8 1" fill="none" stroke="#555" strokeWidth="1.600" /></svg>
            <Refresh aria-label="Actualizar"><svg width="11" height="11"><path d="M8.500 3A4 4 0 109.500 6M9 0v3.500H5.500" fill="none" stroke="#666" strokeWidth="1.500" /></svg></Refresh>
          </PathEnd>
        </PathBox>
        <FindBox><input aria-label="Buscar" placeholder="Buscar en 3212703ED955F10C..." /><Glass c="#666" /></FindBox>
      </AddressRow>
      <Split>
        <Tree>
          {tree.map(([row, name, icon, deep]) => (
            <Node key={name} href="#" $row={row} $deep={deep} $on={name === "Este equipo"}>{icon}{name}</Node>
          ))}
        </Tree>
        <Files>
          <Table>
            <colgroup><col width="241" /><col width="112" /><col width="112" /><col width="73" /></colgroup>
            <thead>
              <tr>
                <Head>Nombre<SortMark width="7" height="4"><path d="M0 4L3.500 .5 7 4" fill="#999" /></SortMark></Head>
                <Head>Fecha de modifica...</Head>
                <Head>Tipo</Head>
                <Head>Tamaño</Head>
              </tr>
            </thead>
            <tbody>
              {files.map(([name, date, tone]) => (
                <Row key={name} $tone={tone}>
                  <Cell><FileName href="#"><Folder />{name}</FileName></Cell>
                  <Cell>{date}</Cell>
                  <Cell>Carpeta de archivos</Cell>
                  <Cell />
                </Row>
              ))}
              <Row>
                <Cell><FileName href="#"><TextDoc /></FileName></Cell>
                <Cell>10-02-2014 9:52</Cell>
                <Cell>Documento de tex...</Cell>
                <Cell $end>1 KB</Cell>
              </Row>
            </tbody>
          </Table>
          <Tip role="tooltip">
            <div>Fecha de creación: 10-02-2014 9:52</div>
            <div>Tamaño: 214 KB</div>
            <div>Archivos: ADX.tpl, BollingerBands.tpl, ...</div>
          </Tip>
          <Pointer width="12" height="18" aria-hidden><path d="M1 1v14l3.500-3 2.500 5 2-1-2.500-5H11z" fill="#fff" stroke="#222" /></Pointer>
        </Files>
      </Split>
      <Info>
        <span>8 elementos</span>
        <span>1 elemento seleccionado</span>
        <Views>
          <View $on aria-label="Detalles"><Ico><path d="M2 2h3v3H2zM2 7h3v3H2zM2 12h3v3H2z" stroke="#8a7ca0" /><path d="M7 3h3M12 3h3M7 6h3M12 6h3M7 9h3M12 9h3M7 13h3M12 13h3" stroke="#447" /></Ico></View>
          <View aria-label="Iconos"><Ico s={14}><path d="M1 2h14v12H1z" fill="#fff" stroke="#9aa" /><path d="M3 4h10v8H3z" fill="#bfe0ee" /><path d="M3 12V7l4 3 6-1v3z" fill="#2e6d62" /></Ico></View>
        </Views>
      </Info>
    </Client>
  </Explorer>
);

const times = ["30 May 2014", "30 May 09:45", "30 May 10:25", "30 May 11:05", "30 May 11:45", "30 May 12:25", "30 May 13:05"];

export default function App() {
  return (
    <Screen>
      <Global />
      <Terminal>
        <MenuBar>
          <MenuLogo><Ico s={14}><path d="M1 1h11v9H1z" fill="#eef6fb" stroke="#5b8fb8" /><path d="M4 5h11v9H4z" fill="#fff" stroke="#5b8fb8" /><path d="M5 10l2-2 2 3 2-3 2 2" stroke="#5b8fb8" /></Ico></MenuLogo>
          {["Archivo", "Ver", "Insertar", "Gráficos", "Herramientas", "Ventana", "Ayuda"].map((m) => <MenuItem key={m}>{m}</MenuItem>)}
          <WindowKeys>
            <WindowKey $w={17} aria-label="Minimizar"><svg width="7" height="7"><path d="M0 6h6" stroke="#567" strokeWidth="1.500" /></svg></WindowKey>
            <WindowKey $w={17} aria-label="Restaurar"><svg width="8" height="8"><path d="M2.500 2V.5h5v4H6M.5 2.500h5v4h-5z" fill="none" stroke="#567" /></svg></WindowKey>
            <WindowKey $w={9} aria-label="Cerrar"><svg width="7" height="7"><path d="M1 1l5 5M6 1L1 6" stroke="#567" /></svg></WindowKey>
          </WindowKeys>
        </MenuBar>
        <ToolBar>
          <ToolGroup>
            <Grip />
            <Tool $w={33} aria-label="Nuevo gráfico"><NewChart /><Caret /></Tool>
            <Tool $w={36} aria-label="Perfiles"><Profiles /><Caret /></Tool>
            <Divider $w={6} />
            <Tool aria-label="Observación"><Market /></Tool>
            <Tool aria-label="Datos"><Target /></Tool>
            <Tool aria-label="Navegador"><StarFolder /></Tool>
            <Tool aria-label="Terminal"><Panel /></Tool>
            <Tool aria-label="Probador"><Tester /></Tool>
            <Divider $w={8} />
            <Tool $w={90} $start>
              <NewOrder />Nueva orden
            </Tool>
            <Tool aria-label="MetaEditor"><Gold /></Tool>
            <Tool $w={90} $start>
              <Auto />AutoTrading
            </Tool>
          </ToolGroup>
          <ToolGroup $edge>
            <Divider $w={8} />
            <Grip />
            <Tool aria-label="Barras"><Axes><path d="M7 5v6M7 9H5M10 3v6M10 4h2" stroke="#2c8a3a" /></Axes></Tool>
            <Tool $on aria-label="Velas"><Axes><path d="M9 1v11" stroke="#1b8a28" /><path d="M7 3h4v6H7z" fill="#2ecc40" stroke="#1b8a28" /></Axes></Tool>
            <Tool aria-label="Línea"><Axes><path d="M4 11l4-6 5 5" stroke="#2c8a3a" /></Axes></Tool>
            <Divider $w={5} />
            <Tool aria-label="Acercar"><Lens /></Tool>
            <Tool aria-label="Alejar"><Lens minus /></Tool>
            <Divider $w={7} />
            <Tool $on aria-label="Desplazar"><Axes><path d="M8 4l4 3.500L8 11z" fill="#3cb54a" stroke="#1b8a28" /></Axes></Tool>
            <Tool $on aria-label="Margen"><Axes><path d="M9 2v9M15 6h-4M13 4l-2 2 2 2" /></Axes></Tool>
            <Divider $w={7} />
            <Tool $w={34} aria-label="Indicadores"><NewOrder /><Caret /></Tool>
            <Tool $w={34} aria-label="Períodos"><Clock /><Caret /></Tool>
            <Tool $w={34} aria-label="Plantillas"><Template /><Caret /></Tool>
          </ToolGroup>
          <SearchField><input aria-label="Buscar en el terminal" /><Glass /></SearchField>
          <News>5</News>
        </ToolBar>
        <ToolBar>
          <ToolGroup>
            <Grip />
            {["M1", "M5", "M15", "M30", "H1", "H4", "D1", "W1", "MN"].map((p) => <Period key={p} $on={p === "M5"}>{p}</Period>)}
            <Divider $w={5} />
          </ToolGroup>
          <ToolGroup $edge>
            <Grip />
            <Tool $on aria-label="Cursor"><Ico><path d="M5 1v12l3-3 2 5 2-1-2-5h4z" fill="#444" /></Ico></Tool>
            <Tool aria-label="Cruz"><Ico stroke="#555"><path d="M8 1v5M8 10v5M1 8h5M10 8h5" /></Ico></Tool>
            <Divider $w={7} />
            <Tool aria-label="Línea vertical"><Ico stroke="#555"><path d="M8 2v12" /></Ico></Tool>
            <Tool aria-label="Línea horizontal"><Ico stroke="#555"><path d="M2 8h12" /></Ico></Tool>
            <Tool aria-label="Tendencia"><Ico stroke="#777"><path d="M2 14L14 2" /></Ico></Tool>
            <Tool aria-label="Canal"><Ico stroke="#444"><path d="M1 11L12 2M3 14l10-8M4 6v7M7 4v7M10 2v7M12 11h3M12 13h3M12 15h3M12 11v4" /></Ico></Tool>
            <Tool aria-label="Fibonacci"><Ico stroke="#444" strokeDasharray="1 1"><path d="M2 3h13M2 6h13M2 9h13" /></Ico></Tool>
            <Tool aria-label="Texto"><Ico stroke="#444"><path d="M4 12L8 4l4 8M5 9h6" /></Ico></Tool>
            <Tool aria-label="Etiqueta"><Ico stroke="#444"><path d="M2 3h12v10H2z" strokeDasharray="1 1" /><path d="M5 5h6M8 5v6" /></Ico></Tool>
            <Tool $w={37} aria-label="Flechas"><Ico><path d="M8 3l4 4H9v4H7V7H4z" fill="#333" /></Ico></Tool>
          </ToolGroup>
        </ToolBar>
        <Charts>
          <MainPane />
          <Oscillators />
          <TimeAxis>{times.map((t) => <TimeMark key={t}>{t}</TimeMark>)}</TimeAxis>
        </Charts>
        <Sheets>
          <Sheet $w={77}>GBPUSD,M5</Sheet>
          <SheetRule />
          <Sheet $w={73}>EURUSD,M5</Sheet>
          <Sheet $w={72} $on>GBPJPY,M5</Sheet>
          <SheetScroll aria-label="Anterior"><svg width="4" height="6"><path d="M4 0v6L0 3z" fill="#777" /></svg></SheetScroll>
        </Sheets>
        <StatusBar>
          <StatusText>Para obtener ayuda, pulse F1</StatusText>
          {[109, 96, 66, 67, 64, 65, 62].map((w, i) => <StatusCell key={i} $w={w} />)}
          <StatusCell $w={143}>
            <svg width="22" height="12" aria-hidden>
              {Array.from({ length: 8 }, (_, i) => (
                <g key={i}><path d={`M${i * 3} 0h2v${9 - i}h-2z`} fill="#6a8a24" /><path d={`M${i * 3} ${10 - i}h2V12h-2z`} fill="#902418" /></g>
              ))}
            </svg>
            156/0 kb
          </StatusCell>
        </StatusBar>
      </Terminal>
      <Static />
      <ExplorerWindow />
    </Screen>
  );
}
